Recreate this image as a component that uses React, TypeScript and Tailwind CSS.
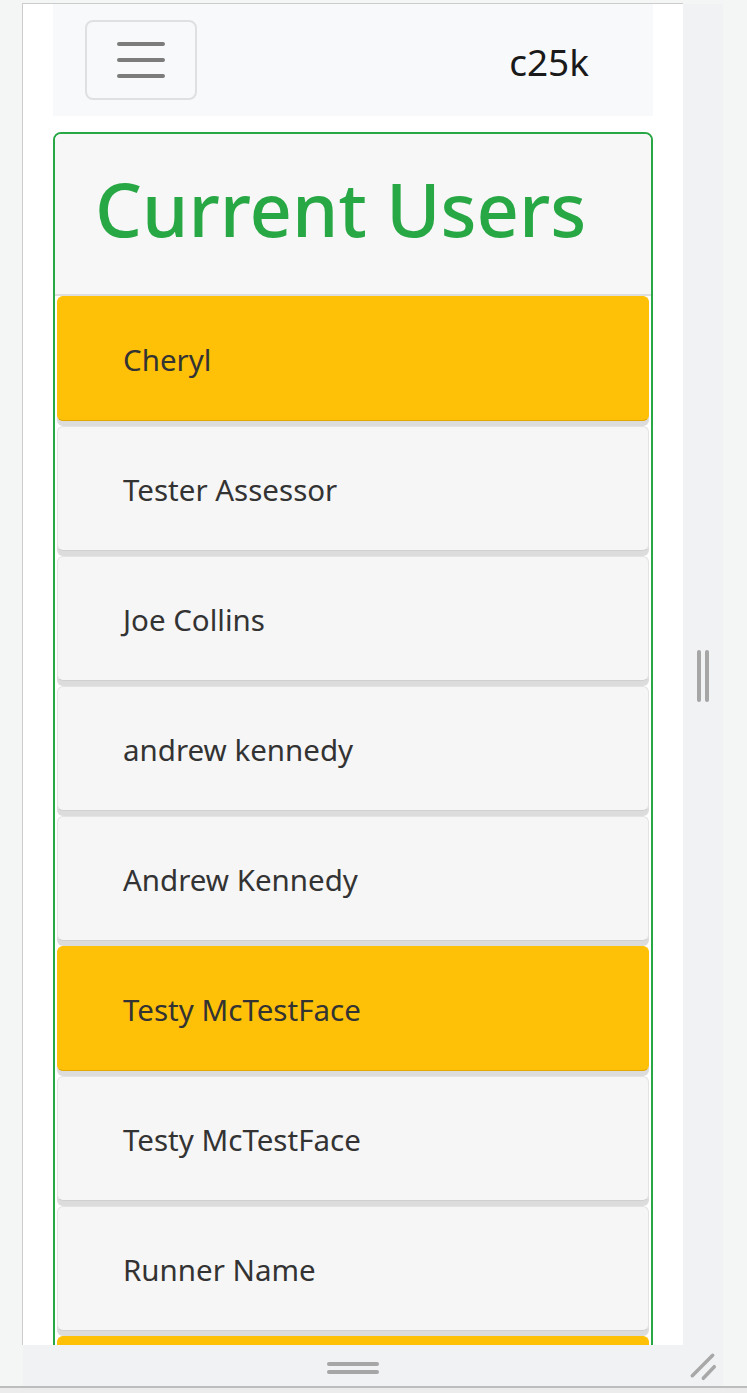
import React from "react";

const users: { name: string; warn: boolean }[] = [
  { name: "Cheryl", warn: true },
  { name: "Tester Assessor", warn: false },
  { name: "Joe Collins", warn: false },
  { name: "andrew kennedy", warn: false },
  { name: "Andrew Kennedy", warn: false },
  { name: "Testy McTestFace", warn: true },
  { name: "Testy McTestFace", warn: false },
  { name: "Runner Name", warn: false },
  { name: "", warn: true },
];

export default function App() {
  return (
    <div className="w-[747px] h-[1393px] bg-[#f4f5f5] flex flex-col overflow-hidden font-['Noto_Sans',sans-serif]">
      <div className="h-[3px] shrink-0" />
      <div className="flex pl-[22px] h-[1342px] shrink-0">
        <div className="w-[661px] h-full border-l border-t border-[#cccccc] bg-white overflow-hidden px-[30px]">
          <nav className="h-[112px] bg-[#f8f9fa] flex items-center justify-between px-[32px]">
            <button className="w-[112px] h-[80px] border-2 border-[#dfe0e1] rounded-[8px] flex items-center justify-center">
              <svg width="60" height="60" viewBox="0 0 30 30">
                <path
                  d="M4 7h22M4 15h22M4 23h22"
                  stroke="rgba(0,0,0,0.5)"
                  strokeWidth="2"
                  strokeLinecap="round"
                  fill="none"
                />
              </svg>
            </button>
            <span className="text-[37px] leading-[60px] mt-[3px] mr-[32px] text-[#1a1a1a]">c25k</span>
          </nav>
          <div className="mt-[16px] border-2 border-[#28a745] rounded-[8px] bg-white overflow-hidden">
            <div className="bg-[#f7f7f7] border-b-2 border-[#dfdfdf] px-[40px] pt-[27px] pb-[37px]">
              <h1 className="text-[74px] leading-[96px] font-medium whitespace-nowrap text-[#28a745]">Current Users</h1>
            </div>
            <div className="px-[2px]">
              {users.map((u, i) => (
                <div
                  key={i}
                  className={
                    u.warn
                      ? "h-[125px] mb-[5px] rounded-[6px] bg-[#ffc107] border border-[#ffc107] border-b-[#e0a800] shadow-[0_5px_0_#dcdcdc] flex items-center pl-[65px] pt-[4px] text-[29.5px] text-[#333333]"
                      : "h-[125px] mb-[5px] rounded-[6px] bg-[#f6f6f6] border border-[#e3e3e3] border-b-[#d0d0d0] shadow-[0_5px_0_#dcdcdc] flex items-center pl-[65px] pt-[4px] text-[29.5px] text-[#333333]"
                  }
                >
                  {u.name}
                </div>
              ))}
            </div>
          </div>
        </div>
        <div className="w-[40px] mt-[1px] bg-[#f1f2f4] flex items-center justify-center gap-[4px]">
          <div className="w-[4px] h-[52px] mt-[3px] rounded-full bg-[#a6a6a6]" />
          <div className="w-[4px] h-[52px] mt-[3px] rounded-full bg-[#a6a6a6]" />
        </div>
      </div>
      <div className="flex ml-[23px] w-[700px] h-[41px] shrink-0 bg-[#f1f2f4]">
        <div className="w-[660px] flex flex-col items-center pt-[17px] gap-[4px]">
          <div className="w-[52px] h-[4px] rounded-full bg-[#a6a6a6]" />
          <div className="w-[52px] h-[4px] rounded-full bg-[#a6a6a6]" />
        </div>
        <div className="w-[40px] h-[41px]">
          <svg width="40" height="41" viewBox="0 0 40 41">
            <path
              d="M9.3 30.7L29.7 10.3M20.3 33.3L31.3 21.7"
              stroke="#a8a8a8"
              strokeWidth="3.5"
              strokeLinecap="round"
              fill="none"
            />
          </svg>
        </div>
      </div>
      <div className="h-[2px] w-full bg-[#bdbdbd] shrink-0" />
      <div className="flex-1 bg-[#ececec]" />
    </div>
  );
}
